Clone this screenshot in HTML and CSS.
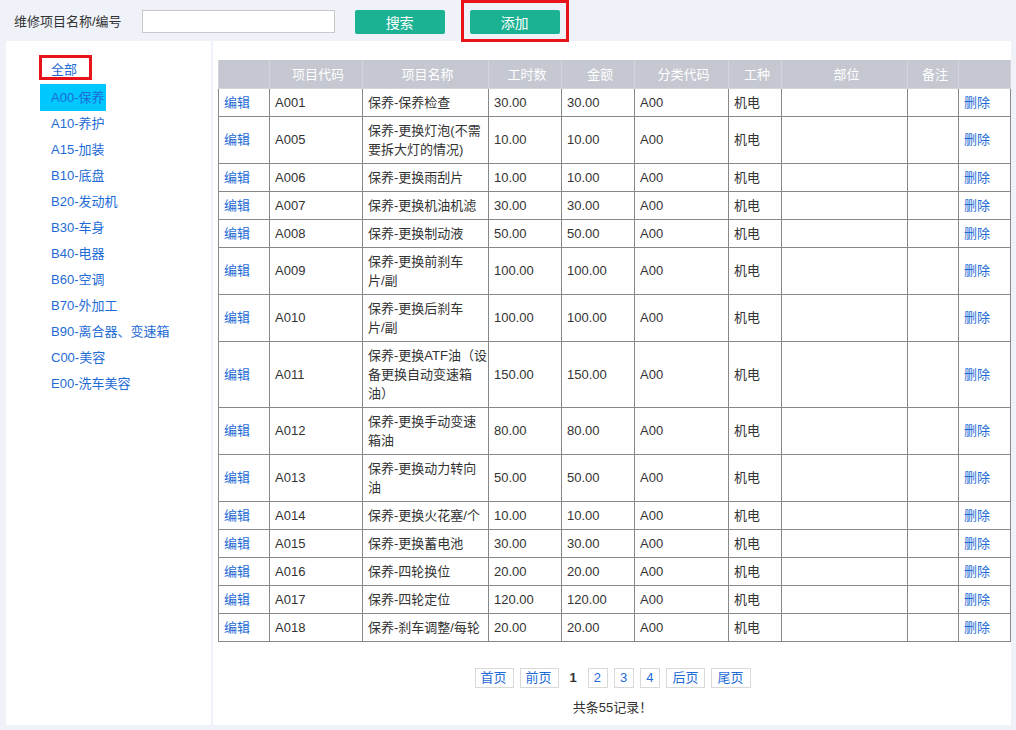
FILE: index.html
```html
<!DOCTYPE html>
<html lang="zh-CN">
<head>
<meta charset="utf-8">
<title>维修项目</title>
<link rel="stylesheet" href="styles.css">
</head>
<body>
<div class="topbar">
  <span class="label">维修项目名称/编号</span>
  <input class="search-input" type="text">
  <button class="btn btn-search">搜索</button>
  <div class="mark-box add-mark"><button class="btn btn-add">添加</button></div>
</div>
<div class="main">
  <div class="side">
    <ul class="cats">
      <li class="li-all"><span class="mark-box all-mark"><a class="cat">全部</a></span></li>
      <li class="li-active"><a class="cat active">A00-保养</a></li>
      <li><a class="cat">A10-养护</a></li>
      <li><a class="cat">A15-加装</a></li>
      <li><a class="cat">B10-底盘</a></li>
      <li><a class="cat">B20-发动机</a></li>
      <li><a class="cat">B30-车身</a></li>
      <li><a class="cat">B40-电器</a></li>
      <li><a class="cat">B60-空调</a></li>
      <li><a class="cat">B70-外加工</a></li>
      <li><a class="cat">B90-离合器、变速箱</a></li>
      <li><a class="cat">C00-美容</a></li>
      <li><a class="cat">E00-洗车美容</a></li>
    </ul>
  </div>
  <div class="content">
    <table class="grid">
      <colgroup>
        <col class="c1"><col class="c2"><col class="c3"><col class="c4"><col class="c5">
        <col class="c6"><col class="c7"><col class="c8"><col class="c9"><col class="c10">
      </colgroup>
      <thead>
        <tr><th></th><th>项目代码</th><th>项目名称</th><th>工时数</th><th>金额</th><th>分类代码</th><th>工种</th><th>部位</th><th>备注</th><th></th></tr>
      </thead>
      <tbody>
        <tr><td><a class="lnk">编辑</a></td><td>A001</td><td class="nm">保养-保养检查</td><td>30.00</td><td>30.00</td><td>A00</td><td>机电</td><td></td><td></td><td><a class="lnk">删除</a></td></tr>
        <tr><td><a class="lnk">编辑</a></td><td>A005</td><td class="nm">保养-更换灯泡(不需<br>要拆大灯的情况)</td><td>10.00</td><td>10.00</td><td>A00</td><td>机电</td><td></td><td></td><td><a class="lnk">删除</a></td></tr>
        <tr><td><a class="lnk">编辑</a></td><td>A006</td><td class="nm">保养-更换雨刮片</td><td>10.00</td><td>10.00</td><td>A00</td><td>机电</td><td></td><td></td><td><a class="lnk">删除</a></td></tr>
        <tr><td><a class="lnk">编辑</a></td><td>A007</td><td class="nm">保养-更换机油机滤</td><td>30.00</td><td>30.00</td><td>A00</td><td>机电</td><td></td><td></td><td><a class="lnk">删除</a></td></tr>
        <tr><td><a class="lnk">编辑</a></td><td>A008</td><td class="nm">保养-更换制动液</td><td>50.00</td><td>50.00</td><td>A00</td><td>机电</td><td></td><td></td><td><a class="lnk">删除</a></td></tr>
        <tr><td><a class="lnk">编辑</a></td><td>A009</td><td class="nm">保养-更换前刹车<br>片/副</td><td>100.00</td><td>100.00</td><td>A00</td><td>机电</td><td></td><td></td><td><a class="lnk">删除</a></td></tr>
        <tr><td><a class="lnk">编辑</a></td><td>A010</td><td class="nm">保养-更换后刹车<br>片/副</td><td>100.00</td><td>100.00</td><td>A00</td><td>机电</td><td></td><td></td><td><a class="lnk">删除</a></td></tr>
        <tr><td><a class="lnk">编辑</a></td><td>A011</td><td class="nm">保养-更换ATF油（设<br>备更换自动变速箱<br>油）</td><td>150.00</td><td>150.00</td><td>A00</td><td>机电</td><td></td><td></td><td><a class="lnk">删除</a></td></tr>
        <tr><td><a class="lnk">编辑</a></td><td>A012</td><td class="nm">保养-更换手动变速<br>箱油</td><td>80.00</td><td>80.00</td><td>A00</td><td>机电</td><td></td><td></td><td><a class="lnk">删除</a></td></tr>
        <tr><td><a class="lnk">编辑</a></td><td>A013</td><td class="nm">保养-更换动力转向<br>油</td><td>50.00</td><td>50.00</td><td>A00</td><td>机电</td><td></td><td></td><td><a class="lnk">删除</a></td></tr>
        <tr><td><a class="lnk">编辑</a></td><td>A014</td><td class="nm">保养-更换火花塞/个</td><td>10.00</td><td>10.00</td><td>A00</td><td>机电</td><td></td><td></td><td><a class="lnk">删除</a></td></tr>
        <tr><td><a class="lnk">编辑</a></td><td>A015</td><td class="nm">保养-更换蓄电池</td><td>30.00</td><td>30.00</td><td>A00</td><td>机电</td><td></td><td></td><td><a class="lnk">删除</a></td></tr>
        <tr><td><a class="lnk">编辑</a></td><td>A016</td><td class="nm">保养-四轮换位</td><td>20.00</td><td>20.00</td><td>A00</td><td>机电</td><td></td><td></td><td><a class="lnk">删除</a></td></tr>
        <tr><td><a class="lnk">编辑</a></td><td>A017</td><td class="nm">保养-四轮定位</td><td>120.00</td><td>120.00</td><td>A00</td><td>机电</td><td></td><td></td><td><a class="lnk">删除</a></td></tr>
        <tr><td><a class="lnk">编辑</a></td><td>A018</td><td class="nm">保养-刹车调整/每轮</td><td>20.00</td><td>20.00</td><td>A00</td><td>机电</td><td></td><td></td><td><a class="lnk">删除</a></td></tr>
      </tbody>
    </table>
    <div class="pager">
      <a class="pg">首页</a>
      <a class="pg">前页</a>
      <span class="pg-cur">1</span>
      <a class="pg">2</a>
      <a class="pg">3</a>
      <a class="pg">4</a>
      <a class="pg">后页</a>
      <a class="pg">尾页</a>
    </div>
    <div class="summary">共条55记录！</div>
  </div>
</div>
</body>
</html>
```
FILE: styles.css
```css
* { box-sizing: border-box; }
html, body {
  margin: 0;
  padding: 0;
}
body {
  background: #eff2f9;
  font-family: "Liberation Sans", "Noto Sans CJK SC", sans-serif;
  font-size: 13px;
  color: #333;
  width: 1016px;
  height: 730px;
  overflow: hidden;
}
.topbar {
  height: 41px;
  display: flex;
  align-items: flex-start;
  padding-left: 14px;
  position: relative;
  z-index: 2;
}
.label {
  margin-top: 13px;
  line-height: 18px;
  color: #333;
}
.search-input {
  margin: 10px 0 0 20px;
  width: 193px;
  height: 23px;
  border: 1px solid #c8c8c8;
  background: #fff;
  padding: 0 4px;
  outline: none;
}
.btn {
  height: 24px;
  width: 90px;
  border: none;
  border-radius: 2px;
  background: #1bb294;
  color: #fff;
  font-family: inherit;
  font-size: 14px;
  padding: 0;
  cursor: pointer;
}
.btn-search {
  margin: 10px 0 0 20px;
}
.mark-box {
  border: 3px solid #e8141c;
}
.add-mark {
  margin-left: 16px;
  height: 42px;
  width: 108px;
  padding: 7px 0 0 6px;
}
.main {
  display: flex;
  gap: 2px;
  padding-left: 6px;
  height: 684px;
}
.side {
  width: 205px;
  background: #fff;
  padding: 14px 0 0 34px;
}
.cats {
  list-style: none;
  margin: 0;
  padding: 0;
}
.cats li {
  height: 26px;
  display: flex;
  align-items: center;
}
.cats li.li-all {
  height: 29px;
  align-items: flex-start;
}
.cats li.li-active {
  height: 27px;
}
.cat {
  display: inline-block;
  color: #1e6bd6;
  line-height: 26px;
  padding: 0 2px 0 11px;
  cursor: pointer;
}
.cat.active {
  background: #00c8ff;
  line-height: 27px;
}
.all-mark {
  display: inline-block;
  width: 53px;
  height: 25px;
  margin-left: -1px;
}
.all-mark .cat {
  line-height: 19px;
  padding: 2px 0 0 9px;
}
.content {
  width: 798px;
  background: #fff;
  padding: 19px 0 0 5px;
}
.grid {
  width: 792px;
  table-layout: fixed;
  border-collapse: collapse;
}
.c1 { width: 51px; }
.c2 { width: 93px; }
.c3 { width: 126px; }
.c4 { width: 73px; }
.c5 { width: 73px; }
.c6 { width: 94px; }
.c7 { width: 53px; }
.c8 { width: 126px; }
.c9 { width: 51px; }
.c10 { width: 52px; }
.grid th {
  background: #c5c8d1;
  color: #fff;
  font-weight: normal;
  height: 28px;
  padding: 0 0 0 4px;
  border: 1px solid #d3d5dc;
  border-top: none;
  text-align: center;
}
.grid td {
  border: 1px solid #888;
  padding: 4px 4px 4px 5px;
  line-height: 19px;
  vertical-align: middle;
  white-space: nowrap;
  overflow: hidden;
}
.lnk {
  color: #1e6bd6;
  cursor: pointer;
}
.pager {
  margin-top: 26px;
  display: flex;
  justify-content: center;
  align-items: center;
  gap: 6px;
  padding-right: 4px;
}
.pg {
  display: inline-block;
  height: 20px;
  line-height: 18px;
  border: 1px solid #d9d9d9;
  padding: 0 6px 0 5px;
  color: #1e6bd6;
  cursor: pointer;
}
.pg-cur {
  font-weight: bold;
  padding: 0 5px;
  color: #333;
}
.summary {
  margin-top: 11px;
  text-align: center;
  padding-right: 4px;
  line-height: 18px;
}
```
